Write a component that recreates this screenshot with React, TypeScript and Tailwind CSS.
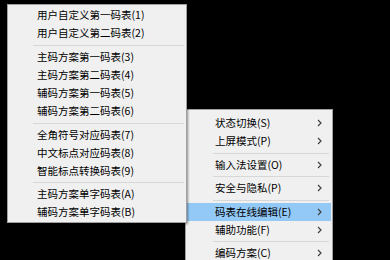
import React from 'react';

const leftItems: (string | number)[] = [
  '用户自定义第一码表(1)',
  '用户自定义第二码表(2)',
  6,
  '主码方案第一码表(3)',
  '主码方案第二码表(4)',
  '辅码方案第一码表(5)',
  '辅码方案第二码表(6)',
  6,
  '全角符号对应码表(7)',
  '中文标点对应码表(8)',
  '智能标点转换码表(9)',
  5,
  '主码方案单字码表(A)',
  '辅码方案单字码表(B)',
];

const rightItems: (string | number)[] = [
  '状态切换(S)',
  '上屏模式(P)',
  6,
  '输入法设置(O)',
  5,
  '安全与隐私(P)',
  6,
  '码表在线编辑(E)',
  '辅助功能(F)',
  5,
  '编码方案(C)',
];

const font = { fontFamily: '"Noto Sans CJK SC", "Noto Sans", sans-serif' };

function Separator({ h, indent }: { h: number; indent: string }) {
  return (
    <div className={`flex items-center ${h === 6 ? 'h-[6px]' : 'h-[5px]'} ${indent}`}>
      <div className="h-px w-full bg-[#d7d7d7]" />
    </div>
  );
}

function Chevron() {
  return (
    <svg width="5" height="8" viewBox="0 0 5 8" className="text-[#404040]">
      <path d="M1 1l3 3-3 3" fill="none" stroke="currentColor" strokeWidth="1.2" />
    </svg>
  );
}

export default function App() {
  return (
    <div className="relative h-[260px] w-[390px] overflow-hidden bg-black" style={font}>
      {/* main menu */}
      <div className="absolute left-[185px] top-[109px] w-[148px] border border-[#a0a0a0] bg-[#f0f0f0] px-px pt-[4px] pb-2">
        {rightItems.map((it, i) =>
          typeof it === 'number' ? (
            <Separator key={i} h={it} indent="pl-[26px] pr-[2px]" />
          ) : (
            <div
              key={i}
              className={`flex h-[18px] items-center justify-between pl-[28px] pr-[9px] text-[10.5px] leading-none text-black ${
                it.startsWith('码表') ? 'bg-[#93c9f6]' : ''
              }`}
            >
              <span>{it}</span>
              <Chevron />
            </div>
          )
        )}
      </div>

      {/* sub menu, drawn over the main one */}
      <div className="absolute left-[7px] top-[4px] z-10 w-[180px] border border-[#a0a0a0] bg-[#f0f0f0] py-px shadow-[1px_1px_2px_rgba(0,0,0,0.4)]">
        {leftItems.map((it, i) =>
          typeof it === 'number' ? (
            <Separator key={i} h={it} indent="pl-[25px] pr-[2px]" />
          ) : (
            <div key={i} className="flex h-[18px] items-center pl-[29px] text-[10.5px] leading-none text-black">
              {it}
            </div>
          )
        )}
      </div>
    </div>
  );
}
